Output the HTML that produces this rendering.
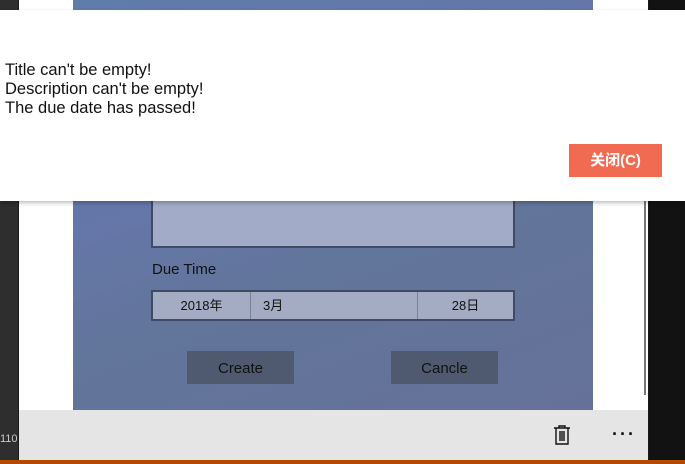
<!DOCTYPE html>
<html><head><style>
body{margin:0;width:685px;height:464px;position:relative;overflow:hidden;background:#1a1a1a;font-family:"Liberation Sans","Noto Sans CJK SC",sans-serif}
.a{position:absolute;box-sizing:border-box}
</style></head><body>
<div class="a" style="left:0;top:0;width:18px;height:464px;background:#2e2e2e"></div>
<div class="a" style="left:649px;top:0;width:36px;height:464px;background:#121212"></div>
<div class="a" style="left:19px;top:0;width:629px;height:460px;background:#fff"></div>
<div class="a" style="left:644px;top:200px;width:2px;height:195px;background:#777"></div>
<div class="a" style="left:73px;top:0;width:520px;height:410px;background:linear-gradient(160deg,#5f7cab 0%,#6576a8 40%,#62759a 60%,#66719a 100%)"></div>
<div class="a" style="left:151px;top:195px;width:364px;height:53px;background:#a2abc8;border:2px solid #3e4a66;border-top:none"></div>
<div class="a" style="left:152px;top:261px;font-size:15px;color:#111">Due Time</div>
<div class="a" style="left:151px;top:290px;width:364px;height:31px;background:#a3acc3;border:2px solid #3e4a66;font-size:13px;color:#111">
<div class="a" style="left:0;top:0;width:98px;height:27px;border-right:1px solid #7a8296;text-align:center;line-height:27px">2018年</div>
<div class="a" style="left:110px;top:0;line-height:27px">3月</div>
<div class="a" style="left:264px;top:0;width:96px;height:27px;border-left:1px solid #7a8296;text-align:center;line-height:27px">28日</div>
</div>
<div class="a" style="left:187px;top:351px;width:107px;height:33px;background:#4f5a70;color:#111;font-size:15px;text-align:center;line-height:35px">Create</div>
<div class="a" style="left:391px;top:351px;width:107px;height:33px;background:#4f5a70;color:#111;font-size:15px;text-align:center;line-height:35px">Cancle</div>
<div class="a" style="left:19px;top:410px;width:629px;height:50px;background:#e5e5e5"></div>
<div class="a" style="left:0;top:433px;font-size:11px;color:#ccc">110</div>
<svg class="a" style="left:552px;top:424px" width="20" height="22" viewBox="0 0 20 22" fill="none" stroke="#111" stroke-width="1.4"><path d="M2 4H18M7 4V2H13V4M4 4V20H16V4M8 7V17M10 7V17M12 7V17"/></svg>
<div class="a" style="left:612px;top:424px;font-size:18px;font-weight:bold;color:#111;letter-spacing:2px">···</div>
<div class="a" style="left:0;top:460px;width:685px;height:4px;background:#b34a00"></div>
<div class="a" style="left:0;top:10px;width:685px;height:191px;background:#fff;box-shadow:0 2px 4px rgba(0,0,0,.25)"></div>
<div class="a" style="left:5px;top:61px;font-size:16.5px;line-height:19px;color:#111;white-space:nowrap">Title can't be empty!<br>Description can't be empty!<br>The due date has passed!</div>
<div class="a" style="left:569px;top:144px;width:93px;height:33px;background:#f06b52;color:#fff;font-size:15px;font-weight:bold;text-align:center;line-height:33px">关闭(C)</div>
</body></html>
